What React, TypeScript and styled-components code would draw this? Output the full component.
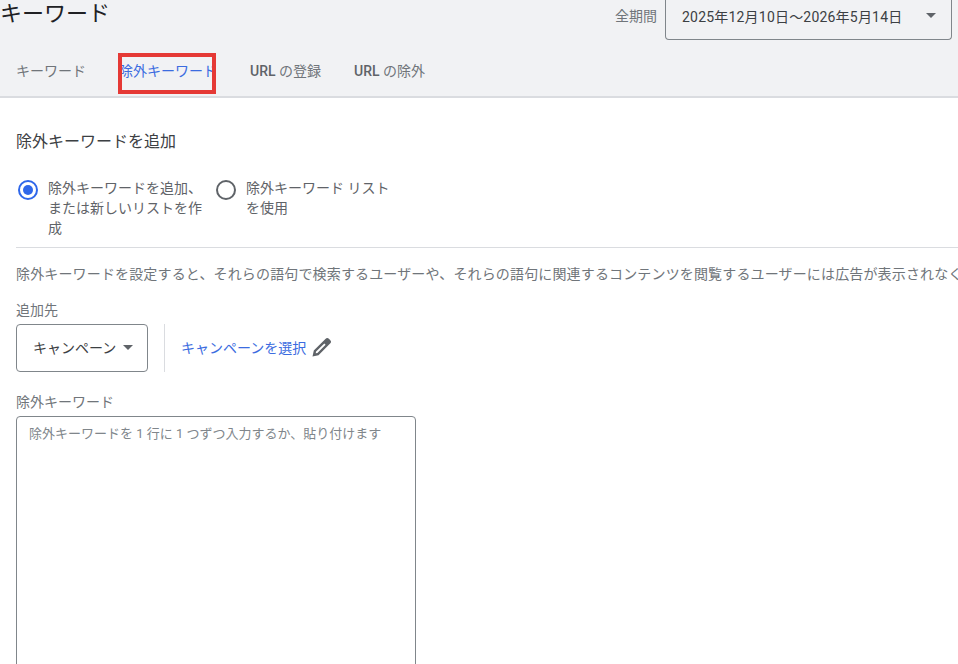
import React from 'react'
import styled, { createGlobalStyle } from 'styled-components'

const GlobalStyle = createGlobalStyle`
    html, body {
        margin: 0;
        padding: 0;
        height: 100%;
        overflow: hidden;
        background: #fff;
    }

    body {
        font-family: Roboto, "Noto Sans CJK JP", sans-serif;
        color: #3c4043;
    }

    * {
        box-sizing: border-box;
    }
`

const Page = styled.div`
    width: 958px;
    height: 664px;
    overflow: hidden;
`

const Header = styled.header`
    height: 98px;
    background: #f1f2f4;
    border-bottom: 2px solid #dadce0;
    display: flex;
    flex-direction: column;
    justify-content: space-between;
`

const TopRow = styled.div`
    display: flex;
    justify-content: space-between;
    align-items: flex-start;
    padding-right: 6px;
`

const Title = styled.h1`
    margin: 0;
    font-size: 22px;
    line-height: 28px;
    font-weight: 400;
    color: #202124;
`

const Period = styled.div`
    display: flex;
    align-items: flex-start;
    gap: 8px;
`

const PeriodLabel = styled.span`
    font-size: 14px;
    line-height: 20px;
    padding-top: 6px;
    color: #70757a;
`

const DateSelect = styled.div`
    width: 287px;
    height: 40px;
    border: 1px solid #80868b;
    border-top: none;
    border-radius: 0 0 4px 4px;
    padding: 0 15px 8px 16px;
    display: flex;
    align-items: center;
    justify-content: space-between;
    font-size: 14px;
    letter-spacing: 0.2px;
`

const Caret = styled.span`
    width: 0;
    height: 0;
    border-left: 5px solid transparent;
    border-right: 5px solid transparent;
    border-top: 5px solid #5f6368;
`

const Tabs = styled.nav`
    display: flex;
    padding-left: 16px;
    height: 50px;
    align-items: flex-start;
    gap: 33px;
`

const Tab = styled.div<{ $active?: boolean }>`
    position: relative;
    font-size: 14px;
    line-height: 20px;
    padding-top: 15px;
    color: ${({ $active }) => ($active ? '#3b6ce0' : '#70757a')};
    white-space: nowrap;
`

const TabLatin = styled.span`
    font-weight: 500;
    color: #5f6368;
`

const Highlight = styled.span`
    position: absolute;
    left: -1px;
    right: 1px;
    top: 7px;
    height: 41px;
    border: 4px solid #e53935;
`

const Content = styled.main`
    padding: 33px 0 0 16px;
`

const SectionTitle = styled.h2`
    margin: 0;
    font-size: 16px;
    line-height: 22px;
    font-weight: 400;
    color: #3c4043;
`

const RadioRow = styled.div`
    display: flex;
    gap: 8px;
    margin-top: 25px;
    padding-left: 2px;
`

const RadioOption = styled.label<{ $width: number }>`
    display: flex;
    width: ${({ $width }) => $width}px;
    gap: 10px;
    font-size: 14px;
    line-height: 20px;
    color: #5f6368;
`

const RadioMark = styled.span<{ $checked?: boolean }>`
    flex: none;
    width: 20px;
    height: 20px;
    border-radius: 50%;
    border: 2px solid ${({ $checked }) => ($checked ? '#2f67ea' : '#5f6368')};
    display: flex;
    align-items: center;
    justify-content: center;
    margin-top: 2px;

    &::after {
        content: '';
        display: ${({ $checked }) => ($checked ? 'block' : 'none')};
        width: 10px;
        height: 10px;
        border-radius: 50%;
        background: #2f67ea;
    }
`

const Divider = styled.hr`
    margin: 9px 0 0;
    border: none;
    border-top: 1px solid #dadce0;
`

const Description = styled.p`
    margin: 16px 0 0;
    font-size: 14px;
    line-height: 20px;
    letter-spacing: 0.15px;
    color: #70757a;
    white-space: nowrap;
`

const FieldLabel = styled.div`
    font-size: 14px;
    line-height: 20px;
    color: #70757a;
`

const AddToBlock = styled.div`
    margin-top: 16px;
`

const AddToRow = styled.div`
    display: flex;
    align-items: center;
    margin-top: 4px;
`

const CampaignSelect = styled.div`
    width: 132px;
    height: 48px;
    border: 1px solid #80868b;
    border-radius: 4px;
    display: flex;
    align-items: center;
    gap: 7px;
    padding: 0 0 2px 16px;
    font-size: 14px;
    color: #3c4043;
`

const VerticalRule = styled.span`
    width: 1px;
    height: 48px;
    background: #dadce0;
    margin: 0 16px;
`

const CampaignLink = styled.a`
    font-size: 14px;
    color: #3b6ce0;
    margin-bottom: 2px;
`

const EditIcon = styled.svg`
    width: 24px;
    height: 24px;
    margin: 0 0 2px 4px;
    fill: #5f6368;
`

const KeywordBlock = styled.div`
    margin-top: 20px;
`

const KeywordArea = styled.div`
    width: 400px;
    height: 300px;
    margin-top: 4px;
    border: 1px solid #80868b;
    border-radius: 4px;
    padding: 7px 12px;
    font-size: 13px;
    line-height: 20px;
    color: #80868b;
`

export default function App() {
    return (
        <Page>
            <GlobalStyle />
            <Header>
                <TopRow>
                    <Title>キーワード</Title>
                    <Period>
                        <PeriodLabel>全期間</PeriodLabel>
                        <DateSelect>
                            2025年12月10日〜2026年5月14日
                            <Caret />
                        </DateSelect>
                    </Period>
                </TopRow>
                <Tabs>
                    <Tab>キーワード</Tab>
                    <Tab $active>
                        除外キーワード
                        <Highlight />
                    </Tab>
                    <Tab><TabLatin>URL</TabLatin> の登録</Tab>
                    <Tab><TabLatin>URL</TabLatin> の除外</Tab>
                </Tabs>
            </Header>
            <Content>
                <SectionTitle>除外キーワードを追加</SectionTitle>
                <RadioRow>
                    <RadioOption $width={190}>
                        <RadioMark $checked />
                        <span>除外キーワードを追加、または新しいリストを作成</span>
                    </RadioOption>
                    <RadioOption $width={176}>
                        <RadioMark />
                        <span>除外キーワード リストを使用</span>
                    </RadioOption>
                </RadioRow>
                <Divider />
                <Description>
                    除外キーワードを設定すると、それらの語句で検索するユーザーや、それらの語句に関連するコンテンツを閲覧するユーザーには広告が表示されなく
                </Description>
                <AddToBlock>
                    <FieldLabel>追加先</FieldLabel>
                    <AddToRow>
                        <CampaignSelect>
                            キャンペーン
                            <Caret />
                        </CampaignSelect>
                        <VerticalRule />
                        <CampaignLink>キャンペーンを選択</CampaignLink>
                        <EditIcon viewBox="0 0 24 24">
                            <path d="M2.5 21.5l1.3-6L15.4 3.9a2.6 2.6 0 0 1 3.7 0l1 1a2.6 2.6 0 0 1 0 3.7L8.5 20.2l-6 1.3zm3.2-3.2l1.7-.4 8.2-8.2-1.3-1.3-8.2 8.2-.4 1.7z" />
                        </EditIcon>
                    </AddToRow>
                </AddToBlock>
                <KeywordBlock>
                    <FieldLabel>除外キーワード</FieldLabel>
                    <KeywordArea>除外キーワードを 1 行に 1 つずつ入力するか、貼り付けます</KeywordArea>
                </KeywordBlock>
            </Content>
        </Page>
    )
}
